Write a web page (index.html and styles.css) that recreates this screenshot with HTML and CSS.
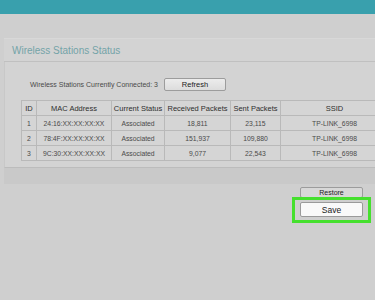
FILE: index.html
```html
<!DOCTYPE html>
<html lang="en">
<head>
    <meta charset="UTF-8">
    <title>Wireless Stations Status</title>
    <link rel="stylesheet" href="styles.css">
</head>
<body>
    <div class="topbar"></div>
    <div class="page">
        <div class="title-bar">Wireless Stations Status</div>
        <div class="panel">
            <div class="status-row">
                <span class="count">Wireless Stations Currently Connected: 3</span>
                <span class="btn refresh">Refresh</span>
            </div>
            <table class="stations">
                <tr>
                    <th class="c-id">ID</th>
                    <th class="c-mac">MAC Address</th>
                    <th class="c-status">Current Status</th>
                    <th class="c-recv">Received Packets</th>
                    <th class="c-sent">Sent Packets</th>
                    <th class="c-ssid">SSID</th>
                </tr>
                <tr>
                    <td>1</td>
                    <td>24:16:XX:XX:XX:XX</td>
                    <td>Associated</td>
                    <td>18,811</td>
                    <td>23,115</td>
                    <td>TP-LINK_6998</td>
                </tr>
                <tr>
                    <td>2</td>
                    <td>78:4F:XX:XX:XX:XX</td>
                    <td>Associated</td>
                    <td>151,937</td>
                    <td>109,880</td>
                    <td>TP-LINK_6998</td>
                </tr>
                <tr>
                    <td>3</td>
                    <td>9C:30:XX:XX:XX:XX</td>
                    <td>Associated</td>
                    <td>9,077</td>
                    <td>22,543</td>
                    <td>TP-LINK_6998</td>
                </tr>
            </table>
        </div>
        <div class="band"></div>
        <div class="actions">
            <span class="btn restore">Restore</span>
            <div class="highlight">
                <span class="btn save">Save</span>
            </div>
        </div>
    </div>
</body>
</html>
```

FILE: styles.css
```css
*{
    margin: 0;
    padding: 0;
    box-sizing: border-box;
}
body{
    width: 375px;
    height: 300px;
    overflow: hidden;
    background: #cfcfcf;
    font-family: "Liberation Sans", Arial, sans-serif;
    color: #3a3a3a;
}
.topbar{
    height: 14px;
    background: #39a0ad;
}
.page{
    padding-left: 4px;
}
.title-bar{
    margin-top: 24px;
    height: 24px;
    padding-left: 8px;
    display: flex;
    align-items: center;
    font-size: 10px;
    color: #73a3a8;
    background: #d3d3d3;
    border-top: 1px solid #d8d8d8;
    border-bottom: 1px solid #c0c0c0;
}
.panel{
    height: 106px;
    padding: 16px 0 0 16px;
    overflow: hidden;
    background: #d3d3d3;
    border-left: 1px solid #c8c8c8;
    border-bottom: 1px solid #bcbcbc;
}
.status-row{
    display: flex;
    align-items: center;
    padding-left: 9px;
    height: 13px;
}
.count{
    font-size: 7px;
    color: #4a4a4a;
}
.btn{
    display: flex;
    align-items: center;
    justify-content: center;
    border: 1px solid #9c9c9c;
    border-radius: 2px;
    color: #222;
}
.refresh{
    margin-left: 6px;
    width: 62px;
    height: 13px;
    font-size: 7.5px;
    background: linear-gradient(#ececec, #dcdcdc);
}
.stations{
    margin-top: 9px;
    border-collapse: collapse;
    width: 367px;
    table-layout: fixed;
    background: #d5d5d5;
}
.stations th, .stations td{
    border: 1px solid #b9b9b9;
    height: 15px;
    text-align: center;
    white-space: nowrap;
    overflow: hidden;
}
.stations th{
    font-size: 7.5px;
    font-weight: normal;
    color: #2e2e2e;
}
.stations td{
    font-size: 6.8px;
    color: #4a4a4a;
}
.c-id{
    width: 15px;
}
.c-mac{
    width: 75px;
}
.c-status{
    width: 53px;
}
.c-recv{
    width: 66px;
}
.c-sent{
    width: 50px;
}
.c-ssid{
    width: 108px;
}
.band{
    height: 16px;
    background: #c9c9c9;
}
.actions{
    display: flex;
    flex-direction: column;
    align-items: flex-end;
    padding-right: 4px;
}
.restore{
    margin-top: 3px;
    margin-right: 8px;
    width: 63px;
    height: 11px;
    font-size: 7px;
    background: #d8d8d8;
}
.highlight{
    margin-top: -1px;
    width: 79px;
    height: 26px;
    padding: 2px 5px 3px;
    border: 3px solid #45e02e;
}
.save{
    width: 63px;
    height: 15px;
    font-size: 8.5px;
    background: #f9f9f9;
    border-color: #9a9a9a;
}
```
